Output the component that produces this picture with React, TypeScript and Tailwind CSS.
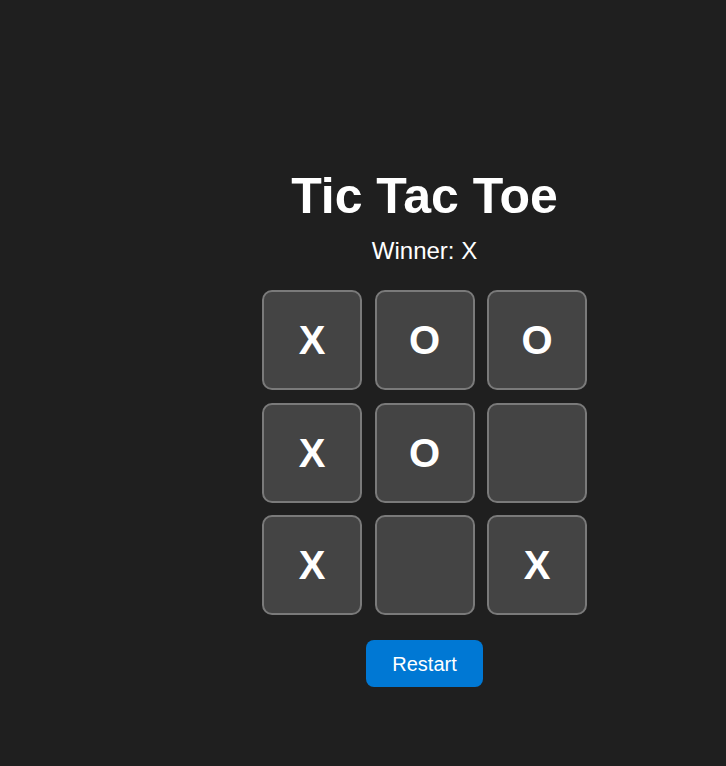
import React from "react";

const board = ["X", "O", "O", "X", "O", "", "X", "", "X"];

export default function App() {
  return (
    <div
      className="min-h-[766px] w-full bg-[#1f1f1f] text-white pl-[123px] pt-[168px]"
      style={{ fontFamily: '"Liberation Sans", Arial, sans-serif' }}
    >
      <div className="flex flex-col items-center">
        <h1 className="text-[50px] font-bold leading-[56px] text-white">Tic Tac Toe</h1>
        <div className="mt-[13px] text-[24px] leading-[28px]">Winner: X</div>
        <div className="mt-[25px] grid grid-cols-[100px_100px_100px] gap-[12.5px]">
          {board.map((v, i) => (
            <button
              key={i}
              className="flex h-[100px] w-[100px] items-center justify-center rounded-[10px] border-2 border-[#7a7a7a] bg-[#444444] text-[40px] font-bold text-white"
            >
              {v}
            </button>
          ))}
        </div>
        <button className="mt-[25px] h-[47px] rounded-[8px] bg-[#0078d4] px-[26px] text-[20px] text-white">
          Restart
        </button>
      </div>
    </div>
  );
}
